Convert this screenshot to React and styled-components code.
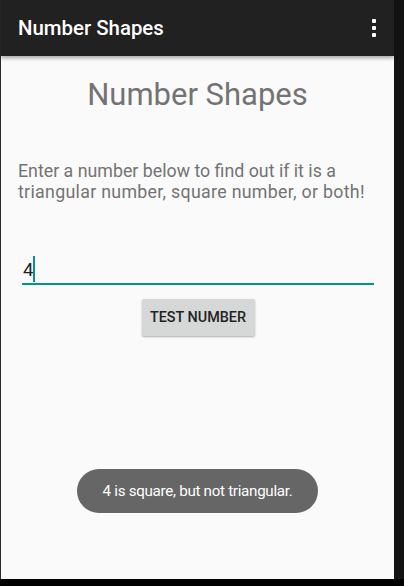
import React from "react";
import styled, { createGlobalStyle } from "styled-components";

const Global = createGlobalStyle`
  html, body { margin: 0; padding: 0; background: #111; }
  body { width: 404px; height: 586px; overflow: hidden; font-family: Roboto, "Noto Sans", sans-serif; }
`;

const Frame = styled.div`
  width: 404px;
  height: 586px;
  display: flex;
  flex-direction: column;
  background: #000;
`;

const Screen = styled.div`
  display: flex;
  height: 579px;
  background: #131313;
`;

const Edge = styled.div`
  width: 1px;
  background: #2a2a2a;
`;

const App = styled.div`
  width: 393px;
  display: flex;
  flex-direction: column;
  background: #fafafa;
  position: relative;
`;

const Toolbar = styled.header`
  height: 56px;
  background: #212121;
  display: flex;
  align-items: center;
  justify-content: space-between;
  padding: 0 18px 0 17px;
  box-shadow: 0 2px 4px rgba(0,0,0,0.35);
  position: relative;
  z-index: 1;
`;

const ToolbarTitle = styled.h1`
  margin: 0;
  color: #fff;
  font-size: 20.4px;
  font-weight: 500;
  letter-spacing: 0;
`;

const Overflow = styled.div`
  display: flex;
  flex-direction: column;
  gap: 3px;
  margin-top: -1px;
`;

const Dot = styled.span`
  width: 4px;
  height: 4px;
  background: #fff;
  border-radius: 1px;
`;

const Content = styled.main`
  flex: 1;
  display: flex;
  flex-direction: column;
  padding: 19px 20px 0 17px;
`;

const Heading = styled.h2`
  margin: 0;
  text-align: center;
  color: #737373;
  font-size: 31px;
  font-weight: 400;
  line-height: 40px;
  padding-left: 3px;
`;

const Intro = styled.p`
  margin: 45px 0 0;
  color: #737373;
  font-size: 17.8px;
  line-height: 21px;
  white-space: nowrap;
`;

const IntroLine = styled.span`
  display: block;
  letter-spacing: ${(p) => p.$spacing || 0}px;
`;

const Field = styled.div`
  margin: 53px 0 0 4px;
  width: 352px;
  height: 30px;
  border-bottom: 2px solid #009688;
  display: flex;
  align-items: flex-end;
  padding-bottom: 2px;
  box-sizing: border-box;
`;

const FieldText = styled.span`
  font-size: 18.5px;
  color: #222;
  line-height: 22px;
  padding-left: 1px;
`;

const Caret = styled.span`
  width: 2px;
  height: 26px;
  background: #009688;
  margin-bottom: -1px;
`;

const ButtonRow = styled.div`
  display: flex;
  justify-content: center;
  margin-top: 14px;
  padding-left: 4px;
`;

const Button = styled.button`
  width: 113px;
  height: 37px;
  border: none;
  border-radius: 2px;
  background: #d6d7d7;
  color: #222;
  font-family: Roboto, sans-serif;
  font-size: 14.4px;
  font-weight: 500;
  box-shadow: 0 1px 2px rgba(0,0,0,0.3);
  padding: 0;
`;

const Toast = styled.div`
  position: absolute;
  left: 76px;
  top: 469px;
  width: 241px;
  height: 44px;
  border-radius: 22px;
  background: #666;
  color: #fff;
  display: flex;
  align-items: center;
  justify-content: center;
  font-family: Roboto, sans-serif;
  font-size: 15.2px;
  letter-spacing: -0.3px;
`;

export default function Main() {
  return (
    <>
      <Global />
      <Frame>
        <Screen>
          <Edge />
          <App>
            <Toolbar>
              <ToolbarTitle>Number Shapes</ToolbarTitle>
              <Overflow>
                <Dot />
                <Dot />
                <Dot />
              </Overflow>
            </Toolbar>
            <Content>
              <Heading>Number Shapes</Heading>
              <Intro>
                <IntroLine>Enter a number below to find out if it is a</IntroLine>
                <IntroLine $spacing={0.3}>triangular number, square number, or both!</IntroLine>
              </Intro>
              <Field>
                <FieldText>4</FieldText>
                <Caret />
              </Field>
              <ButtonRow>
                <Button>TEST NUMBER</Button>
              </ButtonRow>
            </Content>
            <Toast>4 is square, but not triangular.</Toast>
          </App>
        </Screen>
      </Frame>
    </>
  );
}
